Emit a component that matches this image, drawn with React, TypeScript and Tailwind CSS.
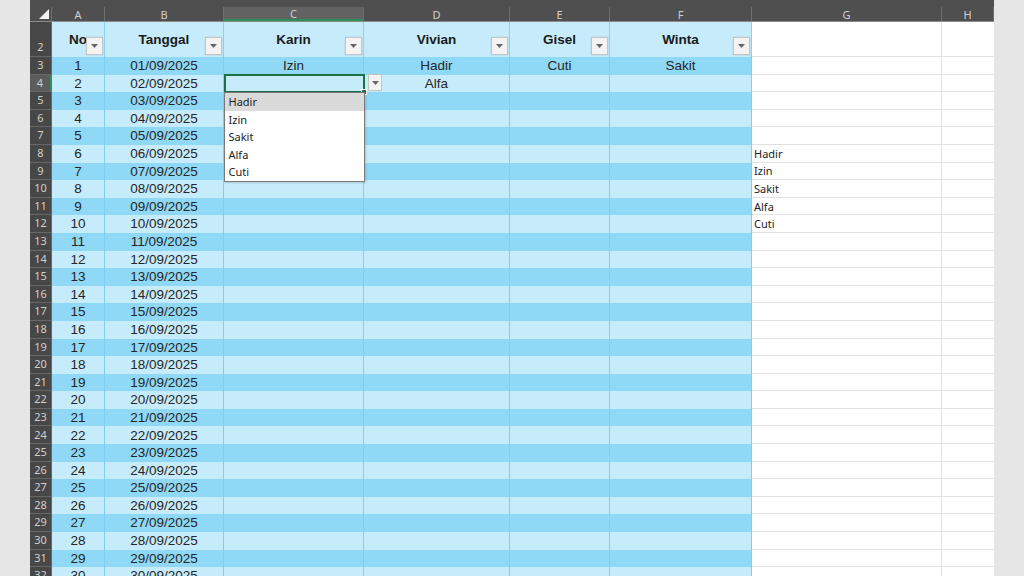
import React from "react"

const GRID = "grid grid-cols-[22px_53px_119px_140px_146px_100px_142px_190px_52px]"
const UI_FONT = "font-['Noto_Sans',sans-serif]"
const CELL_FONT = "font-['Liberation_Sans',Arial,sans-serif]"

const names = ["Karin", "Vivian", "Gisel", "Winta"]
const letters = ["A", "B", "C", "D", "E", "F", "G", "H"]
const options = ["Hadir", "Izin", "Sakit", "Alfa", "Cuti"]

// status per row number (row 3 = first data row)
const statuses: Record<number, string[]> = {
  3: ["Izin", "Hadir", "Cuti", "Sakit"],
  4: ["", "Alfa", "", ""],
}

// helper list in column G
const listG: Record<number, string> = { 8: "Hadir", 9: "Izin", 10: "Sakit", 11: "Alfa", 12: "Cuti" }

function FilterButton() {
  return (
    <div className="absolute right-[1px] bottom-[2px] flex h-[18px] w-[17px] items-center justify-center border border-[#c4c4c4] bg-[#f3f3f3] shadow-[0_0_1px_rgba(0,0,0,0.2)]">
      <svg width="7" height="4" viewBox="0 0 7 4">
        <path d="M0 0h7L3.5 4z" fill="#666" />
      </svg>
    </div>
  )
}

function RowHead({ n, active, bottom }: { n: number; active?: boolean; bottom?: boolean }) {
  return (
    <div
      className={`flex justify-center border-b border-r border-[#676767] text-[11px] text-[#cfcfcf] ${UI_FONT} ${
        bottom ? "items-end pb-[1px]" : "items-center"
      } ${active ? "bg-[#5c5c5c] border-r-2 border-r-[#2f8f5a]" : "bg-[#474747]"}`}
    >
      {n}
    </div>
  )
}

export default function App() {
  const rows = Array.from({ length: 30 }, (_, i) => i + 3)

  return (
    <div className="flex h-[576px] w-[1024px] overflow-hidden bg-[#e6e6e6]">
      <div className="w-[30px] shrink-0 bg-[#e6e6e6]" />

      <div className="relative w-[964px] shrink-0 bg-white">
        {/* top band */}
        <div className="h-[7px] bg-[#4f4f4f]" />

        {/* column letters */}
        <div className={`${GRID} h-[15px] border-b border-[#8a8a8a] bg-[#4f4f4f] text-[11px] text-[#cfcfcf] ${UI_FONT}`}>
          <div className="relative border-r border-[#6e6e6e]">
            <svg className="absolute right-[2px] bottom-[2px]" width="10" height="10" viewBox="0 0 10 10">
              <path d="M10 0v10H0z" fill="#f2f2f2" />
            </svg>
          </div>
          {letters.map((l) => (
            <div
              key={l}
              className={`flex items-center justify-center border-r border-[#6e6e6e] pt-[1px] leading-none ${
                l === "C" ? "border-b-2 border-b-[#2f8f5a] bg-[#626262]" : ""
              }`}
            >
              {l}
            </div>
          ))}
        </div>

        {/* header row (2) */}
        <div className={`${GRID} h-[35px]`}>
          <RowHead n={2} bottom />
          {["No", "Tanggal", ...names].map((h) => (
            <div
              key={h}
              className={`relative flex items-end justify-center border-r border-[#86d3f4] bg-[#c6ebfb] pb-[7px] text-[13.5px] font-bold text-[#1a1a1a] ${CELL_FONT}`}
            >
              {h}
              <FilterButton />
            </div>
          ))}
          <div className="border-r border-b border-[#e1e1e1]" />
          <div className="border-b border-[#e1e1e1]" />
        </div>

        {/* data rows */}
        {rows.map((r, i) => {
          const bg = i % 2 === 0 ? "bg-[#8fd8f6]" : "bg-[#c6ebfb]"
          const vals = statuses[r] ?? ["", "", "", ""]
          return (
            <div key={r} className={`${GRID} h-[17.6px]`}>
              <RowHead n={r} active={r === 4} />
              {[String(i + 1), `${String(i + 1).padStart(2, "0")}/09/2025`, ...vals].map((v, j) => (
                <div
                  key={j}
                  className={`flex items-center justify-center border-r border-[#7fcff2] text-[13.5px] leading-none text-[#262626] ${CELL_FONT} ${bg}`}
                >
                  {v}
                </div>
              ))}
              <div className={`flex items-center border-r border-b border-[#e1e1e1] pl-[2px] text-[11px] leading-none text-[#222] ${UI_FONT}`}>
                {listG[r] ?? ""}
              </div>
              <div className="border-b border-[#e1e1e1]" />
            </div>
          )
        })}

        {/* selected cell C4 */}
        <div className="absolute left-[193.5px] top-[74px] h-[18.5px] w-[141px] border-2 border-[#1e7145]">
          <div className="absolute -right-[3px] -bottom-[3px] h-[4px] w-[4px] bg-[#1e7145] ring-1 ring-white" />
        </div>

        {/* validation dropdown arrow */}
        <div className="absolute left-[338px] top-[74px] flex h-[17px] w-[14px] items-center justify-center border border-[#c4c4c4] bg-[#f3f3f3]">
          <svg width="7" height="4" viewBox="0 0 7 4">
            <path d="M0 0h7L3.5 4z" fill="#666" />
          </svg>
        </div>

        {/* validation list */}
        <div className={`absolute left-[193.5px] top-[92px] w-[141px] border border-[#7a7a7a] bg-white shadow-[1px_1px_2px_rgba(0,0,0,0.15)] text-[11px] text-[#222] ${UI_FONT}`}>
          {options.map((o, k) => (
            <div key={o} className={`flex h-[17.5px] items-center pl-[4px] leading-none ${k === 0 ? "bg-[#dadada]" : ""}`}>
              {o}
            </div>
          ))}
        </div>
      </div>

      <div className="w-[30px] shrink-0 bg-[#e6e6e6]" />
    </div>
  )
}
